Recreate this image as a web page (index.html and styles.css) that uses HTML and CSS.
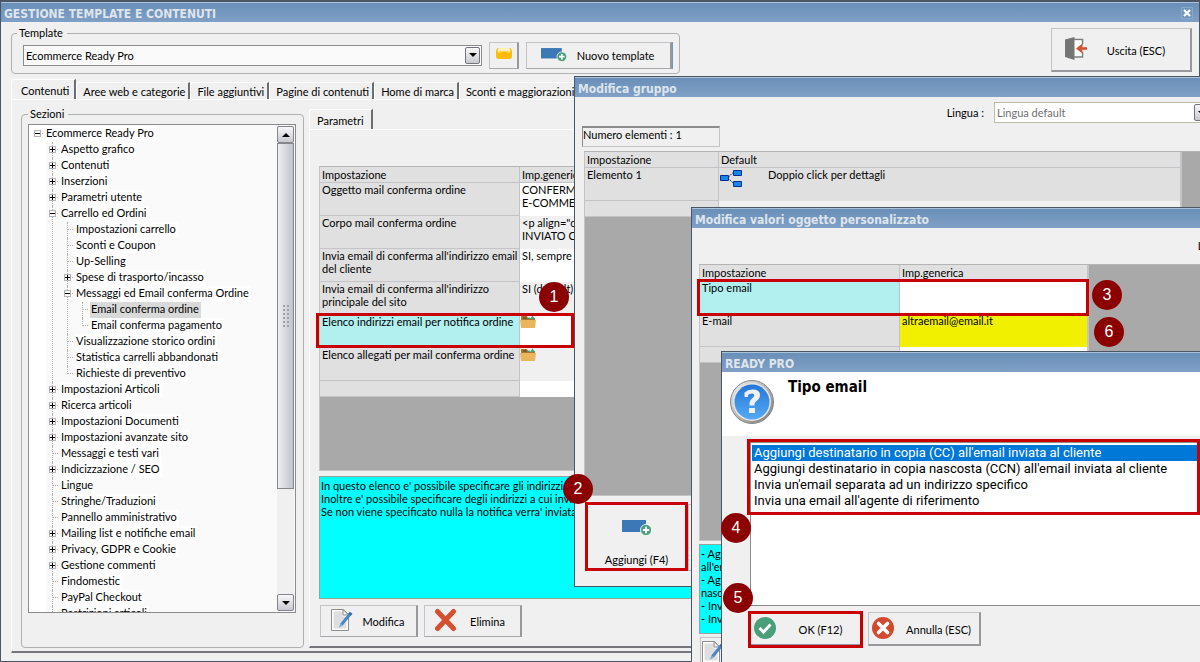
FILE: index.html
```html
<!DOCTYPE html>
<html lang="it">
<head>
<meta charset="utf-8">
<title>Gestione template e contenuti</title>
<link rel="stylesheet" href="styles.css">
</head>
<body>
<svg class="defs" aria-hidden="true">
  <defs>
    <linearGradient id="gFolder" x1="0" y1="0" x2="0" y2="1"><stop offset="0" stop-color="#ffe9a0"/><stop offset=".4" stop-color="#ffc61a"/><stop offset="1" stop-color="#ffb400"/></linearGradient>
    <linearGradient id="gRing" x1="0" y1="0" x2="1" y2="1"><stop offset="0" stop-color="#f4f4f4"/><stop offset="1" stop-color="#777"/></linearGradient>
    <linearGradient id="gBlue" x1="0" y1="0" x2="0" y2="1"><stop offset="0" stop-color="#2477d6"/><stop offset="1" stop-color="#55aaf5"/></linearGradient>
  </defs>
  <symbol id="i-add" viewBox="0 0 30 16">
    <rect x="0" y="0" width="24" height="12" fill="#3b78b5"/>
    <circle cx="24" cy="10" r="5.6" fill="#4a9f78" stroke="#fff" stroke-width=".8"/>
    <path d="M24 6.8v6.4M20.8 10h6.4" stroke="#fff" stroke-width="2"/>
  </symbol>
  <symbol id="i-edit" viewBox="0 0 23 24">
    <path d="M1.5 1.5h12l5 5v16h-17z" fill="#fff" stroke="#8c8c8c"/>
    <path d="M3.5 3.5h9v5h4v12h-13z" fill="#dedede"/>
    <path d="M13 1.5v5.5h5.500z" fill="#f4f4f4" stroke="#8c8c8c"/>
    <path d="M11.500 16.500L20.500 5.500" stroke="#4a86c5" stroke-width="3"/>
    <path d="M19.600 6.600l1.600-1.900" stroke="#2d6cae" stroke-width="3.200"/>
    <path d="M8.800 19.500l1.600-4 2.400 1.900z" fill="#7ea6cf"/>
  </symbol>
  <symbol id="i-doc" viewBox="0 0 16 13">
    <path d="M1 1h6l1 2h7v9H1z" fill="#a9762f"/>
    <path d="M7 4l2-2 2 1 1-3 3 4z" fill="#4a9f78"/>
    <path d="M8 2.500h2l1-2h1l-1.500 3z" fill="#e9efe9"/>
    <path d="M0 5h16l-1 8H1z" fill="#ebb45f"/>
    <path d="M3 2h4v2H3z" fill="#7c5a2a"/>
  </symbol>
</svg>

<main class="desktop">

  <section class="window main-window">
    <header class="titlebar"><h1>GESTIONE TEMPLATE E CONTENUTI</h1>
      <button class="close" aria-label="Chiudi"><svg width="8" height="8" viewBox="0 0 8 8"><path d="M1 1l6 6M7 1L1 7" stroke="#fff" stroke-width="2.200"/></svg></button>
    </header>
    <div class="main-body">
      <div class="toolbar">
        <fieldset class="group template-group">
          <legend>Template</legend>
          <div class="combo">
            <select aria-label="Template"><option>Ecommerce Ready Pro</option></select>
            <span class="combo-arrow"></span>
          </div>
          <button class="btn folder-btn" aria-label="Apri"><svg width="16" height="14" viewBox="0 0 16 14"><path d="M0 4.500Q0 1 3 1h10q3 0 3 3.500V9q0 3-3 3H3q-3 0-3-3z" fill="#ffbb05"/><path d="M1.500 4Q1.500 1 4 1h8q2.500 0 2.500 3-.5 2-2.500 2H4Q2 6 1.500 4z" fill="#fff0c0"/><path d="M2.500 4h11Q12.500 6 11 6H5Q3.500 6 2.500 4z" fill="url(#gFolder)"/></svg></button>
          <button class="btn new-btn"><svg width="26" height="14"><use href="#i-add"/></svg><span>Nuovo template</span></button>
        </fieldset>
        <button class="btn exit-btn">
          <svg width="23" height="23" viewBox="0 0 23 23"><path d="M9 2.500h8.500v5M17.500 15v5H9" fill="none" stroke="#7d7d7d" stroke-width="1.500"/><path d="M9 3.500h7.500v15.500H9z" fill="#fff"/><path d="M0 2.500L9.500 0v23L0 20z" fill="#757575"/><path d="M22 11.500h-7" stroke="#d4502f" stroke-width="2.600"/><path d="M17.500 6.500v3L15 11.500l2.500 2v3L11 11.500z" fill="#d4502f"/></svg>
          <span>Uscita (ESC)</span></button>
      </div>

      <nav class="tabs">
        <button class="tab active">Contenuti</button>
        <button class="tab">Aree web e categorie</button>
        <button class="tab">File aggiuntivi</button>
        <button class="tab">Pagine di contenuti</button>
        <button class="tab">Home di marca</button>
        <button class="tab">Sconti e maggiorazioni</button>
      </nav>

      <div class="panel outer-panel">
        <fieldset class="group sections">
          <legend>Sezioni</legend>
          <div class="tree-box">
            <ul class="tree" role="tree">
              <li><button class="exp open" aria-label="Chiudi"></button><span>Ecommerce Ready Pro</span>
                <ul>
                  <li><button class="exp" aria-label="Espandi"></button><span>Aspetto grafico</span></li>
                  <li><button class="exp" aria-label="Espandi"></button><span>Contenuti</span></li>
                  <li><button class="exp" aria-label="Espandi"></button><span>Inserzioni</span></li>
                  <li><button class="exp" aria-label="Espandi"></button><span>Parametri utente</span></li>
                  <li><button class="exp open" aria-label="Chiudi"></button><span>Carrello ed Ordini</span>
                    <ul>
                      <li><span>Impostazioni carrello</span></li>
                      <li><span>Sconti e Coupon</span></li>
                      <li><span>Up-Selling</span></li>
                      <li><button class="exp" aria-label="Espandi"></button><span>Spese di trasporto/incasso</span></li>
                      <li><button class="exp open" aria-label="Chiudi"></button><span>Messaggi ed Email conferma Ordine</span>
                        <ul>
                          <li><span class="selected">Email conferma ordine</span></li>
                          <li><span>Email conferma pagamento</span></li>
                        </ul>
                      </li>
                      <li><span>Visualizzazione storico ordini</span></li>
                      <li><span>Statistica carrelli abbandonati</span></li>
                      <li><span>Richieste di preventivo</span></li>
                    </ul>
                  </li>
                  <li><button class="exp" aria-label="Espandi"></button><span>Impostazioni Articoli</span></li>
                  <li><button class="exp" aria-label="Espandi"></button><span>Ricerca articoli</span></li>
                  <li><button class="exp" aria-label="Espandi"></button><span>Impostazioni Documenti</span></li>
                  <li><button class="exp" aria-label="Espandi"></button><span>Impostazioni avanzate sito</span></li>
                  <li><span>Messaggi e testi vari</span></li>
                  <li><button class="exp" aria-label="Espandi"></button><span>Indicizzazione / SEO</span></li>
                  <li><span>Lingue</span></li>
                  <li><span>Stringhe/Traduzioni</span></li>
                  <li><span>Pannello amministrativo</span></li>
                  <li><button class="exp" aria-label="Espandi"></button><span>Mailing list e notifiche email</span></li>
                  <li><button class="exp" aria-label="Espandi"></button><span>Privacy, GDPR e Cookie</span></li>
                  <li><button class="exp" aria-label="Espandi"></button><span>Gestione commenti</span></li>
                  <li><span>Findomestic</span></li>
                  <li><span>PayPal Checkout</span></li>
                  <li><span>Restrizioni articoli</span></li>
                </ul>
              </li>
            </ul>
            <div class="scrollbar">
              <span class="sb-btn up"></span>
              <span class="sb-thumb"></span>
              <span class="sb-track"></span>
              <span class="sb-btn"></span>
            </div>
          </div>
        </fieldset>

        <div class="params">
          <nav class="tabs"><button class="tab active">Parametri</button></nav>
          <div class="panel inner-panel">
            <div class="grid-box">
              <table class="grid">
                <colgroup><col class="col-name"><col></colgroup>
                <thead><tr><th>Impostazione</th><th>Imp.generica</th></tr></thead>
                <tbody>
                  <tr><td>Oggetto mail conferma ordine</td><td>CONFERMA ORDINE<br>E-COMMERCE</td></tr>
                  <tr class="alt"><td>Corpo mail conferma ordine</td><td>&lt;p align="center"&gt;<br>INVIATO CON SUCCESSO</td></tr>
                  <tr><td>Invia email di conferma all'indirizzo email del cliente</td><td>SI, sempre</td></tr>
                  <tr class="alt"><td>Invia email di conferma all'indirizzo principale del sito</td><td>SI (default)</td></tr>
                  <tr class="current"><td>Elenco indirizzi email per notifica ordine</td><td class="icon-cell"><svg width="16" height="13"><use href="#i-doc"/></svg></td></tr>
                  <tr class="alt"><td>Elenco allegati per mail conferma ordine</td><td class="icon-cell"><svg width="16" height="13"><use href="#i-doc"/></svg></td></tr>
                  <tr class="short"><td></td><td></td></tr>
                </tbody>
              </table>
            </div>
            <p class="hint">In questo elenco e' possibile specificare gli indirizzi email<br>Inoltre e' possibile specificare degli indirizzi a cui inviare<br>Se non viene specificato nulla la notifica verra' inviata</p>
            <div class="actions">
              <button class="btn"><svg width="23" height="24"><use href="#i-edit"/></svg><span>Modifica</span></button>
              <button class="btn"><svg width="23" height="24" viewBox="0 0 23 24"><path d="M3.500 3.500l16 17M19.500 3.500l-16 17" stroke="#d4502f" stroke-width="5" stroke-linecap="round"/></svg><span>Elimina</span></button>
            </div>
          </div>
        </div>
      </div>
    </div>
  </section>

  <section class="window group-window">
    <header class="titlebar"><h2>Modifica gruppo</h2></header>
    <div class="group-body">
      <div class="lang-row">
        <label for="lang">Lingua :</label>
        <div class="combo lang-combo"><select id="lang"><option>Lingua default</option></select><span class="combo-arrow"></span></div>
      </div>
      <output class="count">Numero elementi : 1</output>
      <div class="grid-box">
        <table class="grid group-grid">
          <colgroup><col class="col-item"><col></colgroup>
          <thead><tr><th>Impostazione</th><th>Default</th></tr></thead>
          <tbody>
            <tr><td>Elemento 1</td><td class="detail"><svg width="24" height="18" viewBox="0 0 24 18"><path d="M9 8.500l5-5M9 9l5 5" stroke="#1a1a70" stroke-dasharray="2 1"/><path d="M1.500 6.500h8v5h-8zM14.500 1.500h8v5h-8zM14.500 12.500h8v5h-8z" fill="#1786ec" stroke="#0a2c96"/></svg><span>Doppio click per dettagli</span></td></tr>
            <tr class="short"><td></td><td></td></tr>
          </tbody>
        </table>
      </div>
      <div class="big-actions">
        <button class="btn big-btn"><svg width="30" height="16"><use href="#i-add"/></svg><span>Aggiungi (F4)</span></button>
        <button class="btn big-btn" aria-label="Modifica"></button>
      </div>
    </div>
  </section>

  <section class="window values-window">
    <header class="titlebar"><h2>Modifica valori oggetto personalizzato</h2></header>
    <div class="values-body">
      <span class="values-lang">Lingua :</span>
      <div class="grid-box">
        <table class="grid values-grid">
          <colgroup><col class="col-name"><col></colgroup>
          <thead><tr><th>Impostazione</th><th>Imp.generica</th></tr></thead>
          <tbody>
            <tr class="current"><td>Tipo email</td><td></td></tr>
            <tr class="filled"><td>E-mail</td><td>altraemail@email.it</td></tr>
            <tr class="short"><td></td><td></td></tr>
          </tbody>
        </table>
      </div>
      <p class="hint">- Aggiungi destinatario in copia<br>all'email inviata<br>- Aggiungi destinatario in copia<br>nascosta<br>- Invia un'email separata<br>- Invia una email</p>
      <div class="actions"><button class="btn" aria-label="Modifica"><svg width="23" height="24"><use href="#i-edit"/></svg></button></div>
    </div>
  </section>

  <section class="window prompt-window">
    <header class="titlebar"><h2>READY PRO</h2></header>
    <div class="prompt-head">
      <svg width="46" height="46" viewBox="0 0 46 46"><circle cx="23" cy="23" r="21.500" fill="url(#gRing)" stroke="#888"/><circle cx="23" cy="23" r="19" fill="#e4e4e4"/><circle cx="23" cy="23" r="17.500" fill="url(#gBlue)"/><path d="M15.500 13.500q3.500-3 8-3 7.500 0 7.500 5.500 0 3.500-3.500 6-2 1.400-2 3v1.500h-5v-2.500q0-2.800 2.800-4.800 2-1.500 2-2.900 0-1.800-2.300-1.800-2.500 0-4 1.500v2h-3.500z" fill="#f0f0fa"/><rect x="20" y="29" width="6" height="5" fill="#f0f0fa"/></svg>
      <h3>Tipo email</h3>
    </div>
    <div class="prompt-body">
      <ul class="choices" role="listbox">
        <li class="chosen" role="option">Aggiungi destinatario in copia (CC) all'email inviata al cliente</li>
        <li role="option">Aggiungi destinatario in copia nascosta (CCN) all'email inviata al cliente</li>
        <li role="option">Invia un'email separata ad un indirizzo specifico</li>
        <li role="option">Invia una email all'agente di riferimento</li>
      </ul>
      <div class="prompt-actions">
        <button class="btn"><svg width="22" height="22" viewBox="0 0 22 22"><circle cx="11" cy="11" r="11" fill="#4a9f78"/><path d="M5.500 11l4 4 7-7.500" fill="none" stroke="#fff" stroke-width="3"/></svg><span>OK (F12)</span></button>
        <button class="btn"><svg width="22" height="22" viewBox="0 0 22 22"><circle cx="11" cy="11" r="11" fill="#d04a30"/><path d="M6.500 6.500l9 9M15.500 6.500l-9 9" stroke="#fff" stroke-width="3.600" stroke-linecap="round"/></svg><span>Annulla (ESC)</span></button>
      </div>
    </div>
  </section>

  <div class="mark mark-list"></div><b class="step step-1">1</b>
  <div class="mark mark-add"></div><b class="step step-2">2</b>
  <div class="mark mark-type"></div><b class="step step-3">3</b>
  <div class="mark mark-choices"></div><b class="step step-4">4</b>
  <div class="mark mark-ok"></div><b class="step step-5">5</b>
  <b class="step step-6">6</b>
</main>
</body>
</html>
```

FILE: styles.css
```css
* { box-sizing: border-box; }

body {
  margin: 0;
  background: #f0f0f0;
  color: #000;
  font: 11px/13px Lato, "DejaVu Sans Condensed", sans-serif;
}

h1, h2, h3, p, ul { margin: 0; padding: 0; }
ul { list-style: none; }
svg { display: block; flex: none; }
button, select { font: inherit; color: inherit; margin: 0; }
.defs { position: absolute; width: 0; height: 0; }

.desktop {
  position: relative;
  display: flex;
  height: 100vh;
  min-height: 662px;
  overflow: hidden;
}

/* Windows */
.window {
  display: flex;
  flex-direction: column;
  background: #f0f0f0;
  border: 1px solid #4b5563;
}
.main-window { flex: 1; min-width: 0; border-top-width: 2px; }
.titlebar {
  display: flex;
  align-items: center;
  justify-content: space-between;
  flex: none;
  height: 20px;
  padding: 2px 6px 0 3px;
  border-top: 1px solid #a9c3dc;
  background: linear-gradient(#6a8fb8, #80a0c6);
  color: #dfe5ec;
}
.titlebar h1, .titlebar h2, .prompt-head h3 { font-family: "DejaVu Sans Condensed", "Noto Sans", sans-serif; }
.titlebar h1, .titlebar h2 { font-size: 12px; line-height: 16px; font-weight: bold; white-space: nowrap; }
.close {
  display: grid;
  place-items: center;
  width: 12px;
  height: 12px;
  margin-bottom: 2px;
  padding: 0;
  border: 1px solid #88a9cb;
  background: #7497bd;
}

/* Shared controls */
.btn {
  display: flex;
  align-items: center;
  padding: 0;
  background: #f0f0f0;
  border: 1px solid #c4c4c8;
  border-right: 2px solid #98989c;
  border-bottom-color: #a8a8ac;
  white-space: nowrap;
}
.btn span { flex: 1; text-align: center; }
.group {
  min-width: 0;
  margin: 0;
  border: 1px solid #b0b0b0;
  border-radius: 4px;
}
.group legend { padding: 0 4px 1px 2px; line-height: 12px; }
.combo { position: relative; flex: 1; display: flex; height: 21px; }
.combo select {
  flex: 1;
  min-width: 0;
  padding: 0 2px;
  border: 1px solid #8c8c8c;
  border-radius: 0;
  background: #fafafa;
  appearance: none;
}
.combo-arrow {
  position: absolute;
  top: 2px;
  right: 2px;
  width: 15px;
  height: 17px;
  border: 1px solid #74747c;
  border-radius: 2px;
  background: linear-gradient(#f8f8fa, #c8c8d0);
  pointer-events: none;
}
.combo-arrow::after, .sb-btn::after {
  content: "";
  position: absolute;
  left: 50%;
  top: 50%;
  margin: -2px 0 0 -4px;
  border: 4px solid transparent;
  border-top-color: #000;
  border-bottom: 0;
}

/* Main window */
.main-body { flex: 1; min-height: 0; display: flex; flex-direction: column; padding: 5px 7px 8px 10px; }
.toolbar { display: flex; justify-content: space-between; align-items: flex-start; height: 52px; }
.template-group {
  display: flex;
  align-items: center;
  gap: 7px;
  width: 669px;
  height: 47px;
  padding: 0 7px 3px 11px;
}
.template-group legend { margin-left: -6px; }
.folder-btn { justify-content: center; width: 30px; height: 27px; padding-bottom: 3px; }
.new-btn { width: 146px; height: 27px; padding: 0 6px 0 14px; box-shadow: 1px 0 #6f97c4; }
.new-btn svg { width: 26px; height: 14px; }
.exit-btn { width: 141px; height: 44px; margin-top: 1px; padding: 0 6px 2px 13px; border-bottom: 2px solid #98989c; }
.exit-btn span { padding-top: 3px; }

.tabs { display: flex; align-items: flex-end; flex: none; height: 20px; }
.tab {
  height: 17px;
  padding: 0 3px 0 6px;
  border: 0;
  border-top: 1px solid #fff;
  border-left: 1px solid #fff;
  border-right: 2px solid #6e6e6e;
  border-radius: 3px 0 0 0;
  background: #f0f0f0;
  white-space: nowrap;
}
.tab.active { height: 20px; padding: 1px 5px 0 9px; }
.params .tab.active { padding: 1px 7px 0; }
.panel { flex: 1; min-height: 0; border-left: 1px solid #fff; border-top: 1px solid #fff; border-bottom: 2px solid #76767a; }
.outer-panel { display: flex; gap: 5px; padding: 8px 0 3px 9px; }

.sections { display: flex; flex: none; width: 283px; padding: 3px 7px 35px 6px; }
.tree-box {
  flex: 1;
  height: 489px;
  display: flex;
  justify-content: space-between;
  overflow: hidden;
  padding: 1px;
  border: 1px solid #8c8c8c;
  background: linear-gradient(to right, #fff 17px, #fafafa 17px);
}
.tree li { position: relative; padding-left: 15px; }
.tree span { display: inline-block; height: 16px; line-height: 14px; padding: 0 2px 0 1px; background: #fff; white-space: nowrap; vertical-align: top; }
.tree .selected { background: #d9d9d9; }
.tree li::before {
  content: "";
  position: absolute;
  left: 8px;
  top: 7px;
  width: 5px;
  border-top: 1px dotted #b0b0b0;
}
.tree ul > li::after {
  content: "";
  position: absolute;
  left: 7px;
  top: 0;
  bottom: 0;
  border-left: 1px dotted #b0b0b0;
}
.tree ul > li:last-child::after { bottom: auto; height: 8px; }
.exp {
  position: absolute;
  z-index: 1;
  left: 4px;
  top: 4px;
  width: 7px;
  height: 7px;
  padding: 0;
  border: 1px solid #b4b4b4;
  background:
    linear-gradient(#000, #000) center / 5px 1px no-repeat,
    linear-gradient(#000, #000) center / 1px 5px no-repeat,
    #fff;
}
.exp.open { background: linear-gradient(#000, #000) center / 5px 1px no-repeat, #fff; }

.scrollbar { display: flex; flex-direction: column; flex: none; width: 17px; background: #f0f0f0; }
.sb-btn { position: relative; flex: none; height: 17px; border: 1px solid #85858c; border-radius: 2px; background: linear-gradient(#f8f8fa, #c8c8d0); }
.sb-btn.up::after { transform: rotate(180deg); }
.sb-thumb {
  display: grid;
  place-items: center;
  flex: none;
  height: 346px;
  border: 1px solid #85858c;
  background: linear-gradient(to right, #eeeef2, #c2c2cc);
}
.sb-thumb::after {
  content: "";
  width: 8px;
  height: 24px;
  background: radial-gradient(circle, #a0a0a8 1px, transparent 1px) 0 0 / 4px 4px;
}
.sb-track { flex: 1; }

.params { flex: 1; min-width: 0; display: flex; flex-direction: column; }
.params .tabs { height: 21px; }
.inner-panel { display: flex; flex-direction: column; padding: 36px 0 9px 9px; }
.grid-box { flex: 1; min-height: 0; overflow: hidden; border: 1px solid #c4c4c8; border-top-color: #b4b4b4; background: #a9a9a9; }
.hint { flex: none; height: 123px; margin: 5px 0 6px; padding: 2px 1px; border: 1px solid #8fa5a5; background: #0ff; white-space: nowrap; }
.actions { display: flex; gap: 6px; flex: none; margin-left: 1px; }
.actions .btn { width: 98px; height: 32px; padding: 0 0 2px 9px; }
.actions span { padding: 3px 4px 0 2px; }

/* Tables */
.grid { width: 100%; table-layout: fixed; border-collapse: separate; border-spacing: 0; }
.col-name { width: 200px; }
.col-item { width: 134px; }
.grid th, .grid td { padding: 0 0 0 2px; text-align: left; vertical-align: top; font-weight: normal; overflow: hidden; }
.grid th { height: 16px; padding-top: 1px; background: #e0e0e0; border-bottom: 1px solid #c4c4c8; white-space: nowrap; }
.grid td { height: 33px; background: #fff; }
.grid th:first-child, .grid td:first-child { border-right: 1px solid #c4c4c8; }
.grid td:first-child { background: #e0e0e0; border-bottom: 1px solid #c4c4c8; }
.grid td + td { white-space: nowrap; }
.grid .alt td + td { background: #f0f0f0; }
.grid .current td:first-child { background: #b2efef; }
.grid .short td { height: 16px; }
.grid .filled td + td { background: #f0f000; }
.grid td.icon-cell { padding-left: 0; }

/* Group editor */
.group-window { position: absolute; top: 76px; left: 574px; right: -20px; }
.group-body { padding: 5px 8px 15px 7px; }
.lang-row { display: flex; align-items: center; justify-content: flex-end; gap: 10px; }
.lang-combo { flex: none; width: 217px; }
.lang-combo select { color: #707070; border-color: #bcbca8; background: #fff; }
.count { display: block; width: 138px; height: 21px; margin: 3px 0 4px; border: 1px solid #c4c4c8; border-top: 2px solid #8c8c8c; border-left: 1px solid #8c8c8c; }
.group-body .grid-box { height: 345px; margin-left: 2px; }
.group-grid { width: 597px; border-right: 2px solid #c4c4c8; }
.group-grid td + td { background: #e0e0e0; }
.group-grid .short td + td { background: #f0f0f0; }
.grid td.detail { padding-left: 0; }
.detail svg { float: left; margin: 1px 25px 0 0; }
.big-actions { display: flex; gap: 1px; margin: 8px 0 0 5px; }
.big-btn { flex-direction: column; justify-content: flex-end; gap: 17px; width: 100px; height: 67px; padding-bottom: 4px; }
.big-btn span { flex: none; }

/* Object value editor */
.values-window { position: absolute; top: 207px; left: 691px; right: -40px; bottom: -20px; }
.values-body { flex: 1; min-height: 0; display: flex; flex-direction: column; padding: 11px 7px 12px; }
.values-lang { align-self: flex-end; margin-right: -3px; margin-bottom: 12px; }
.values-grid { width: 389px; border-right: 2px solid #c4c4c8; }
.values-body .hint { height: 90px; margin: 3px 0; }
.values-body .actions .btn { padding-left: 0; }

/* Choice prompt */
.prompt-window { position: absolute; top: 351px; left: 721px; right: -20px; bottom: -10px; }
.prompt-head { display: flex; gap: 13px; flex: none; height: 64px; padding: 7px; background: #fff; }
.prompt-head h3 { font-size: 15px; line-height: 16px; }
.prompt-body { flex: 1; min-height: 0; display: flex; flex-direction: column; padding: 6px 7px 25px 28px; }
.choices { flex: 1; min-height: 0; overflow: hidden; padding: 2px 1px; border: 1px solid #8c8c8c; background: #fff; font-family: Roboto, sans-serif; font-size: 13px; line-height: 16px; }
.choices li { padding: 0 2px; white-space: nowrap; }
.chosen { background: #0078d7; color: #fff; }
.prompt-actions { display: flex; gap: 5px; flex: none; margin-top: 6px; }
.prompt-actions .btn { width: 113px; height: 34px; padding: 0 0 2px 3px; border-bottom: 2px solid #98989c; }
.prompt-actions span { padding: 3px 0 0 4px; }

/* Guide overlays */
.mark { position: absolute; border: 3px solid #c80000; pointer-events: none; }
.step {
  position: absolute;
  width: 30px;
  height: 30px;
  border-radius: 50%;
  background: #8b0000;
  color: #fff;
  font: 16px/30px "Liberation Sans", sans-serif;
  text-align: center;
}
.mark-list { left: 316px; top: 313px; width: 258px; height: 35px; }
.mark-add { left: 585px; top: 502px; width: 103px; height: 69px; }
.mark-type { left: 697px; top: 279px; width: 392px; height: 37px; }
.mark-choices { left: 747px; top: 439px; width: 453px; height: 76px; }
.mark-ok { left: 748px; top: 611px; width: 115px; height: 37px; }
.step-1 { left: 539px; top: 282px; }
.step-2 { left: 563px; top: 474px; }
.step-3 { left: 1092px; top: 280px; }
.step-4 { left: 721px; top: 513px; }
.step-5 { left: 723px; top: 583px; }
.step-6 { left: 1094px; top: 317px; }
```
